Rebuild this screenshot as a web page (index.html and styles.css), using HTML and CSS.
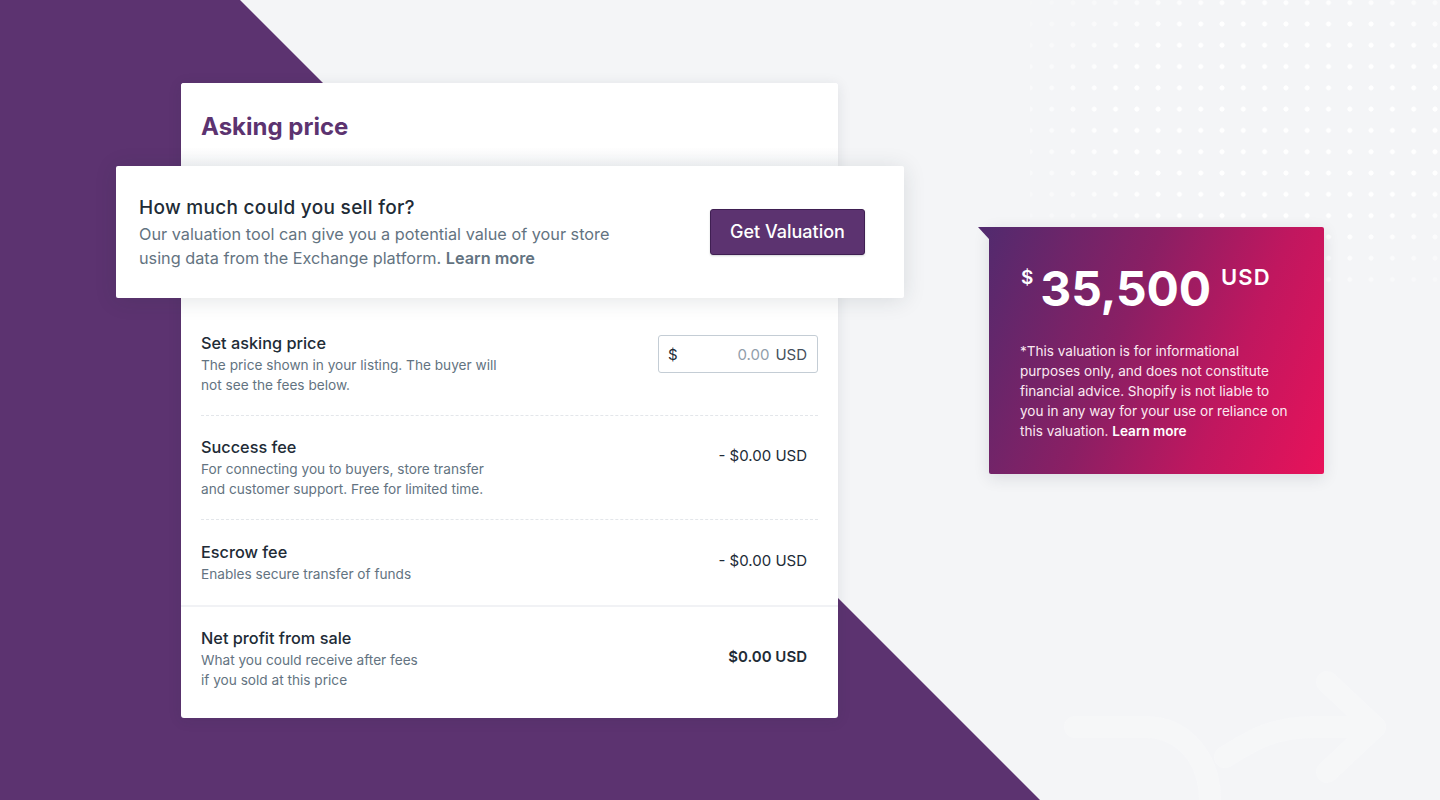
FILE: index.html
```html
<!DOCTYPE html>
<html lang="en">
<head>
<meta charset="utf-8">
<title>Asking price</title>
<link rel="stylesheet" href="styles.css">
</head>
<body>
<div class="bg-shape"></div>
<div class="dots"></div>
<svg class="deco-arrow" width="360" height="170" viewBox="0 0 360 170" fill="none">
  <path d="M40 97 H110 C150 97 175 130 175 170" stroke="#ffffff" stroke-width="22" stroke-linecap="round"/>
  <path d="M190 127 C215 112 235 97 280 97 H340" stroke="#ffffff" stroke-width="22" stroke-linecap="round"/>
  <path d="M292 52 L340 97 L292 142" stroke="#ffffff" stroke-width="22" stroke-linecap="round" stroke-linejoin="round"/>
</svg>
<main class="stage">
  <section class="card">
    <header class="card-header">
      <h1 class="card-title">Asking price</h1>
    </header>
    <div class="promo">
      <div class="promo-text">
        <h2 class="promo-title">How much could you sell for?</h2>
        <p class="promo-desc">Our valuation tool can give you a potential value of your store<br>using data from the Exchange platform. <a class="link" href="#">Learn more</a></p>
      </div>
      <button class="btn-primary" type="button">Get Valuation</button>
    </div>
    <div class="row row-first">
      <div class="row-text">
        <div class="row-title">Set asking price</div>
        <div class="row-desc">The price shown in your listing. The buyer will<br>not see the fees below.</div>
      </div>
      <label class="price-input">
        <span class="pi-currency">$</span>
        <span class="pi-value">0.00</span>
        <span class="pi-unit">USD</span>
      </label>
    </div>
    <div class="row row-dashed row-success">
      <div class="row-text">
        <div class="row-title">Success fee</div>
        <div class="row-desc">For connecting you to buyers, store transfer<br>and customer support. Free for limited time.</div>
      </div>
      <div class="amount">- $0.00 USD</div>
    </div>
    <div class="row row-dashed row-escrow">
      <div class="row-text">
        <div class="row-title">Escrow fee</div>
        <div class="row-desc">Enables secure transfer of funds</div>
      </div>
      <div class="amount">- $0.00 USD</div>
    </div>
    <div class="row row-total">
      <div class="row-text">
        <div class="row-title">Net profit from sale</div>
        <div class="row-desc">What you could receive after fees<br>if you sold at this price</div>
      </div>
      <div class="amount amount-total">$0.00 USD</div>
    </div>
  </section>

  <aside class="valuation">
    <div class="val-price">
      <span class="val-sym">$</span>
      <span class="val-num">35,500</span>
      <span class="val-cur">USD</span>
    </div>
    <p class="val-note">*This valuation is for informational<br>purposes only, and does not constitute<br>financial advice. Shopify is not liable to<br>you in any way for your use or reliance on<br>this valuation. <a class="val-link" href="#">Learn more</a></p>
  </aside>
</main>
</body>
</html>
```

FILE: styles.css
```css
* { box-sizing: border-box; }

html, body {
  margin: 0;
  padding: 0;
}

body {
  width: 1440px;
  height: 800px;
  overflow: hidden;
  position: relative;
  background: #f4f5f7;
  font-family: Inter, "Noto Sans", sans-serif;
  color: #212b36;
}

.bg-shape {
  position: absolute;
  inset: 0;
  background: #5c3370;
  clip-path: polygon(0 0, 240px 0, 1040px 800px, 0 800px);
}

.dots {
  position: absolute;
  left: 1030px;
  top: 0;
  width: 410px;
  height: 290px;
  background-image: radial-gradient(circle, #ffffff 2.2px, transparent 2.8px);
  background-size: 21.3px 21.3px;
  background-position: 11px -8px;
  -webkit-mask-image: radial-gradient(ellipse 80% 75% at 62% 42%, #000 50%, transparent 100%);
  mask-image: radial-gradient(ellipse 80% 75% at 62% 42%, #000 50%, transparent 100%);
}

.deco-arrow {
  position: absolute;
  left: 1035px;
  top: 630px;
  opacity: 0.22;
}

.stage {
  position: relative;
  z-index: 1;
  display: flex;
  align-items: flex-start;
  gap: 151px;
  padding: 83px 0 0 181px;
}

/* Main card */
.card {
  width: 657px;
  background: #ffffff;
  border-radius: 3px;
  box-shadow: 0 2px 14px rgba(33, 43, 54, 0.10);
  padding-bottom: 28px;
}

.card-header {
  height: 83px;
  display: flex;
  align-items: center;
  padding: 3px 20px 0;
  background: linear-gradient(to bottom, #ffffff 78%, #f6f7f9 100%);
  border-radius: 3px 3px 0 0;
}

.card-title {
  margin: 0;
  font-size: 24px;
  font-weight: 700;
  color: #5c3370;
}

.promo {
  margin: 0 -66px 0 -65px;
  height: 132px;
  background: #ffffff;
  border-radius: 2px;
  box-shadow: 0 2px 22px rgba(33, 43, 54, 0.13);
  display: flex;
  align-items: center;
  justify-content: space-between;
  padding: 0 39px 0 23px;
  position: relative;
  z-index: 2;
}

.promo-text { padding-top: 2px; }

.promo-title {
  margin: 0 0 2px;
  font-size: 19px;
  line-height: 24px;
  font-weight: 500;
  letter-spacing: 0.3px;
  color: #212b36;
}

.promo-desc {
  margin: 0;
  font-size: 16.25px;
  line-height: 24px;
  color: #637381;
}

.link {
  color: #637381;
  font-weight: 600;
  text-decoration: none;
}

.btn-primary {
  width: 155px;
  height: 46px;
  margin-top: -1px;
  border: 1px solid #3f1f52;
  border-radius: 3px;
  background: #5c3370;
  color: #ffffff;
  font-family: inherit;
  font-size: 18px;
  font-weight: 500;
  box-shadow: 0 1px 2px rgba(33, 43, 54, 0.2);
  cursor: pointer;
}

/* Rows */
.row {
  display: flex;
  justify-content: space-between;
  align-items: flex-start;
  margin: 0 20px;
  padding: 20px 0 20px;
}

.row-first { padding-top: 33px; }

.row-dashed {
  border-top: 1px dashed #e3e6ea;
}

.row-success { padding-top: 19px; padding-bottom: 20px; }

.row-escrow { padding-top: 20px; padding-bottom: 21px; }

.row-total {
  margin: 0;
  padding: 19px 20px 0;
  border-top: 2px solid #f1f2f5;
}

.row-title {
  font-size: 16.3px;
  line-height: 24px;
  font-weight: 500;
  color: #212b36;
}

.row-desc {
  font-size: 13.65px;
  line-height: 20px;
  color: #637381;
}

.price-input {
  width: 160px;
  height: 38px;
  margin-top: 4px;
  border: 1px solid #c4cdd5;
  border-radius: 3px;
  display: flex;
  align-items: center;
  padding: 0 10px 0 9px;
  font-size: 15px;
  color: #454f5b;
}

.pi-currency { color: #212b36; }
.pi-value { margin-left: auto; color: #919eab; }
.pi-unit { margin-left: 6px; color: #454f5b; }

.amount {
  margin-top: 9px;
  margin-right: 11px;
  font-size: 15px;
  line-height: 24px;
  color: #212b36;
}

.amount-total {
  margin-top: 19px;
  font-weight: 600;
}

/* Valuation card */
.valuation {
  position: relative;
  width: 335px;
  height: 247px;
  margin-top: 144px;
  padding: 33px 20px 0 31px;
  border-radius: 0 2px 2px 2px;
  background: linear-gradient(112deg, #532a6e 0%, #8a1f64 40%, #c0175f 70%, #e8125a 100%);
  box-shadow: 0 4px 16px rgba(33, 43, 54, 0.12);
  color: #ffffff;
}

.valuation::before {
  content: "";
  position: absolute;
  left: -11px;
  top: 0;
  border-top: 12px solid #532a6e;
  border-left: 11px solid transparent;
}

.val-price {
  display: flex;
  align-items: flex-start;
  height: 64px;
}

.val-sym {
  font-size: 19px;
  font-weight: 600;
  line-height: 24px;
  margin: 6px 7px 0 1px;
}

.val-num {
  font-size: 48px;
  font-weight: 700;
  line-height: 58px;
  letter-spacing: -0.2px;
}

.val-cur {
  font-size: 22px;
  font-weight: 600;
  line-height: 24px;
  letter-spacing: 1.2px;
  margin: 5px 0 0 10px;
}

.val-note {
  margin: 17px 0 0;
  font-size: 13.55px;
  line-height: 20px;
  color: #fbe9f1;
}

.val-link {
  color: #ffffff;
  font-weight: 600;
  text-decoration: none;
}
```
